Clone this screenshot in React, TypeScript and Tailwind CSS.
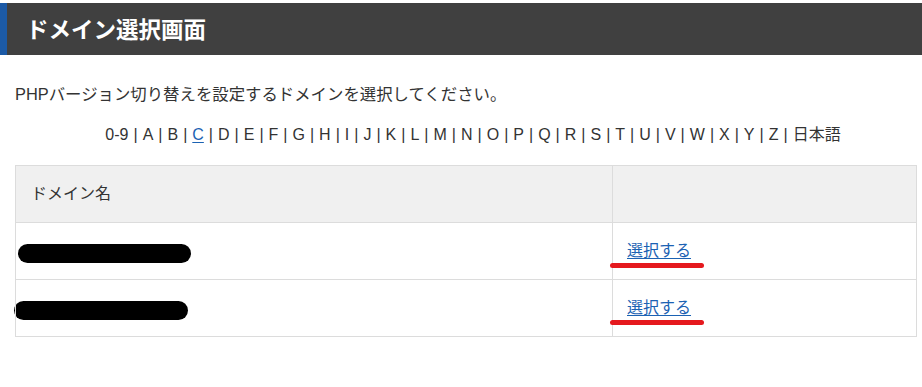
import React from "react";

const LETTERS = ["0-9", "A", "B", "C", "D", "E", "F", "G", "H", "I", "J", "K", "L", "M", "N", "O", "P", "Q", "R", "S", "T", "U", "V", "W", "X", "Y", "Z", "日本語"];

const FONT = { fontFamily: '"Liberation Sans", "Noto Sans CJK JP", sans-serif' };

function SelectLink() {
  return (
    <span className="relative inline-block">
      <a href="#" className="text-[#1b62b3] underline underline-offset-2">
        選択する
      </a>
      {/* red marker stroke drawn over the screenshot */}
      <span className="absolute left-[-17px] top-[24px] h-[5px] w-[94px] rounded-full bg-[#e5191e]" />
    </span>
  );
}

export default function App() {
  return (
    <div className="min-h-[387px] bg-white pt-[3px] text-[#333]" style={FONT}>
      <div className="flex h-[52px] items-center border-l-[7px] border-[#1c5aa6] bg-[#404040] pl-[19px]">
        <h1 className="text-[22.5px] font-bold text-white" style={{ fontFamily: '"Noto Sans CJK JP", sans-serif' }}>
          ドメイン選択画面
        </h1>
      </div>

      <div className="pl-[15px] pr-[5px]">
        <p className="mt-[27px] text-[16.4px] leading-[24px]">PHPバージョン切り替えを設定するドメインを選択してください。</p>

        <div className="mt-[17px] pl-[14px] text-center text-[16px] leading-[24px]">
          {LETTERS.map((l, i) => (
            <React.Fragment key={l}>
              {i > 0 && <span className="px-[5px]">|</span>}
              {l === "C" ? (
                <a href="#" className="text-[#1b62b3] underline underline-offset-2">
                  C
                </a>
              ) : (
                l
              )}
            </React.Fragment>
          ))}
        </div>

        <table className="mt-[18px] w-[902px] border-collapse text-[16px]">
          <thead>
            <tr className="h-[57px] bg-[#f0f0f0]">
              <th className="w-[597px] border border-[#dcdcdc] pl-[15px] text-left font-normal">ドメイン名</th>
              <th className="border border-[#dcdcdc]" />
            </tr>
          </thead>
          <tbody>
            <tr className="h-[57px]">
              <td className="border border-[#dcdcdc] pl-[2px]">
                <div className="mt-[4px] h-[19px] w-[173px] rounded-full bg-black" />
              </td>
              <td className="border border-[#dcdcdc] pl-[14px]">
                <SelectLink />
              </td>
            </tr>
            <tr className="h-[57px]">
              <td className="border border-[#dcdcdc]">
                <div className="ml-[-2px] mt-[4px] h-[19px] w-[174px] rounded-full bg-black" />
              </td>
              <td className="border border-[#dcdcdc] pl-[14px]">
                <SelectLink />
              </td>
            </tr>
          </tbody>
        </table>
      </div>
    </div>
  );
}
